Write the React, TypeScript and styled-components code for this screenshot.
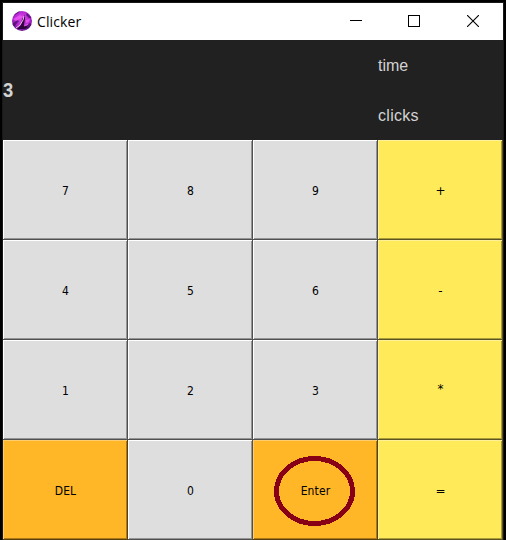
import React from "react";
import styled, { createGlobalStyle } from "styled-components";

const GlobalStyle = createGlobalStyle`
  * { box-sizing: border-box; }
  body { margin: 0; background: #000; overflow: hidden; }
`;

const Frame = styled.div`
  width: 506px;
  height: 540px;
  padding: 2px 2px 0 2px;
  background: #000;
`;

const Window = styled.main`
  width: 502px;
  height: 538px;
  border: 1px solid #191919;
  border-bottom: 0;
  background: #202020;
`;

const TitleBar = styled.header`
  display: flex;
  align-items: center;
  height: 37px;
  padding-left: 9px;
  background: #fff;
`;

const Title = styled.h1`
  flex: 1;
  margin: 0 0 0 5px;
  color: #000;
  font: 400 14px/20px "Open Sans", "Noto Sans", sans-serif;
  letter-spacing: 0.1px;
`;

const WindowControl = styled.button<{ $width: number }>`
  display: flex;
  align-items: center;
  justify-content: center;
  width: ${({ $width }) => $width}px;
  height: 37px;
  padding: 0 0 1px;
  border: 0;
  background: transparent;
`;

const Display = styled.section`
  display: grid;
  grid-template-columns: 375px 125px;
  height: 100px;
  background: #212121;
  color: #d3d3d3;
  font-family: "Liberation Sans", Arial, sans-serif;
`;

const Value = styled.output`
  display: flex;
  align-items: center;
  font-size: 20px;
  font-weight: 700;
  transform: scaleX(0.92);
  transform-origin: left;
`;

const Stats = styled.div`
  display: grid;
  grid-template-rows: 50px 50px;
  align-items: center;
  padding-top: 1px;
  font-size: 16px;
`;

const Stat = styled.span<{ $tracking: number }>`
  letter-spacing: ${({ $tracking }) => $tracking}px;
`;

const Keypad = styled.section`
  display: grid;
  grid-template-columns: repeat(4, 125px);
  grid-template-rows: repeat(4, 100px);
`;

type Tone = "digit" | "operator" | "action";

const tones = {
  digit: { face: "#dedede", light: "#fff", shade: "#949494", dark: "#505050", font: '"DejaVu Sans Condensed"' },
  operator: { face: "#ffeb5a", light: "#fff09a", shade: "#aa9c3b", dark: "#5c5420", font: '"DejaVu Sans"' },
  action: { face: "#ffb627", light: "#ffcc70", shade: "#aa7819", dark: "#5c400c", font: '"DejaVu Sans Condensed"' },
};

const Key = styled.button<{ $tone: Tone; $raised: boolean }>`
  position: relative;
  display: flex;
  align-items: center;
  justify-content: center;
  padding: ${({ $raised }) => ($raised ? "0 0 2px" : "2px 0 0")};
  border: 0;
  background: ${({ $tone }) => tones[$tone].face};
  box-shadow:
    inset -1px -1px ${({ $tone }) => tones[$tone].dark},
    inset 1px 1px ${({ $tone }) => tones[$tone].light},
    inset -2px -2px ${({ $tone }) => tones[$tone].shade};
  color: #000;
  font: 400 12px/14px ${({ $tone }) => tones[$tone].font}, "DejaVu Sans", sans-serif;
  font-stretch: ${({ $tone }) => ($tone === "operator" ? "normal" : "condensed")};
  letter-spacing: ${({ $tone }) => ($tone === "action" ? "0.15px" : "0")};
`;

const Ring = styled.svg`
  position: absolute;
  left: 20px;
  top: 15px;
  pointer-events: none;
`;

const keys: { label: string; tone: Tone }[] = [
  { label: "7", tone: "digit" },
  { label: "8", tone: "digit" },
  { label: "9", tone: "digit" },
  { label: "+", tone: "operator" },
  { label: "4", tone: "digit" },
  { label: "5", tone: "digit" },
  { label: "6", tone: "digit" },
  { label: "-", tone: "operator" },
  { label: "1", tone: "digit" },
  { label: "2", tone: "digit" },
  { label: "3", tone: "digit" },
  { label: "*", tone: "operator" },
  { label: "DEL", tone: "action" },
  { label: "0", tone: "digit" },
  { label: "Enter", tone: "action" },
  { label: "=", tone: "operator" },
];

const LogoImage = styled.svg`
  margin-bottom: 2px;
`;

function Logo() {
  return (
    <LogoImage width="20" height="20" viewBox="0 0 20 20" aria-hidden="true">
      <defs>
        <radialGradient id="orb" cx="0.5" cy="0.4" r="0.65">
          <stop offset="0" stopColor="#dc48ee" />
          <stop offset="0.6" stopColor="#b326d0" />
          <stop offset="1" stopColor="#52107c" />
        </radialGradient>
        <clipPath id="disc"><circle cx="10" cy="10" r="10" /></clipPath>
      </defs>
      <g clipPath="url(#disc)">
        <rect width="20" height="20" fill="url(#orb)" />
        <path d="M0 6L6 2L9 0L5 0L0 4M0 13L5 9L7 10L2 16M15 2L20 7L17 7L14 4M14 15L18 12L20 14L15 20" fill="#4a0c68" opacity="0.75" />
        <path d="M1 8L8 4L11 6L4 10M14 9L18 8L17 11L14 12" fill="#f05af5" opacity="0.75" />
        <path d="M13 4L13 8L12 14L16 16L13 18L5 18L9 14L10 8Z" fill="#2c063b" />
        <path d="M12 5L11 9L8 14L4 17" fill="none" stroke="#f6b6ed" strokeWidth="1" />
        <path d="M12 15L16 13" stroke="#d45ce0" strokeWidth="1.1" />
      </g>
    </LogoImage>
  );
}

export default function App() {
  return (
    <>
      <GlobalStyle />
      <Frame>
        <Window>
          <TitleBar>
            <Logo />
            <Title>Clicker</Title>
            <WindowControl $width={58} aria-label="Minimize">
              <svg width="12" height="12" shapeRendering="crispEdges">
                <path d="M0 5.5H12" stroke="#000" />
              </svg>
            </WindowControl>
            <WindowControl $width={58} aria-label="Maximize">
              <svg width="12" height="12" shapeRendering="crispEdges">
                <path d="M.5 .5H11.5V11.5H.5Z" fill="none" stroke="#000" />
              </svg>
            </WindowControl>
            <WindowControl $width={60} aria-label="Close">
              <svg width="12" height="12">
                <path d="M0 0L12 12M12 0L0 12" stroke="#000" strokeWidth="1.1" />
              </svg>
            </WindowControl>
          </TitleBar>
          <Display>
            <Value>3</Value>
            <Stats>
              <Stat $tracking={0}>time</Stat>
              <Stat $tracking={0.3}>clicks</Stat>
            </Stats>
          </Display>
          <Keypad>
            {keys.map(({ label, tone }) => (
              <Key key={label} $tone={tone} $raised={label === "*"}>
                {label}
                {label === "Enter" && (
                  <Ring width="84" height="72" shapeRendering="crispEdges">
                    <ellipse cx="41.5" cy="36" rx="38" ry="32.5" fill="none" stroke="#880015" strokeWidth="5" />
                  </Ring>
                )}
              </Key>
            ))}
          </Keypad>
        </Window>
      </Frame>
    </>
  );
}
